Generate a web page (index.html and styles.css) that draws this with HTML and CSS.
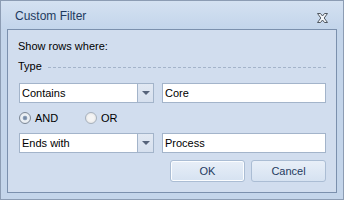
FILE: index.html
```html
<!DOCTYPE html>
<html lang="en">
<head>
    <meta charset="UTF-8">
    <title>Custom Filter</title>
    <link rel="stylesheet" href="styles.css">
</head>
<body>
    <div class="window">
        <div class="titlebar">
            <span class="title">Custom Filter</span>
            <svg class="close" width="11" height="10" viewBox="0 0 11 10">
                <polygon points="0.5,0.5 3.5,0.5 5.5,3 7.5,0.5 10.5,0.5 7.2,5 10.5,9.5 7.5,9.5 5.5,7 3.5,9.5 0.5,9.5 3.8,5" fill="#f3f6fa" stroke="#4f5760" stroke-width="1" stroke-linejoin="round"/>
            </svg>
        </div>
        <div class="panel">
            <div class="caption">Show rows where:</div>
            <div class="group">
                <span>Type</span>
                <span class="rule"></span>
            </div>

            <div class="row">
                <div class="combo">
                    <span class="combo-text">Contains</span>
                    <span class="combo-btn"><span class="arrow"></span></span>
                </div>
                <div class="textbox">Core</div>
            </div>

            <div class="radios">
                <label class="radio checked"><span class="dot"></span>AND</label>
                <label class="radio"><span class="dot"></span>OR</label>
            </div>

            <div class="row">
                <div class="combo">
                    <span class="combo-text">Ends with</span>
                    <span class="combo-btn"><span class="arrow"></span></span>
                </div>
                <div class="textbox">Process</div>
            </div>

            <div class="buttons">
                <button class="default">OK</button>
                <button>Cancel</button>
            </div>
        </div>
    </div>
</body>
</html>
```

FILE: styles.css
```css
body {
    margin: 0;
    font-family: "Liberation Sans", Arial, sans-serif;
    font-size: 11px;
    color: #000;
}
.window {
    width: 344px;
    height: 200px;
    box-sizing: border-box;
    border: 1px solid #8c9cb3;
    background-color: #c4d5ea;
    display: flex;
    flex-direction: column;
}
.titlebar {
    height: 28px;
    flex: none;
    display: flex;
    align-items: center;
    justify-content: space-between;
    padding: 2px 15px 0 14px;
    box-sizing: border-box;
    background: linear-gradient(#d4e1f1, #c3d5eb);
}
.title {
    font-size: 12px;
    color: #1e3a60;
}
.close {
    display: block;
    margin-top: 3px;
}
.panel {
    flex: 1;
    margin: 0 6px 6px;
    border: 1px solid #7b90ad;
    background-color: #d1ddee;
    padding: 0 10px 0 10px;
}
.caption {
    margin-top: 10px;
    line-height: 13px;
}
.group {
    margin-top: 7px;
    display: flex;
    align-items: center;
    line-height: 13px;
}
.rule {
    flex: 1;
    margin-left: 6px;
    margin-top: 2px;
    border-top: 1px dashed #a4b4ca;
}
.row {
    display: flex;
    margin-left: 1px;
    gap: 8px;
}
.group + .row {
    margin-top: 10px;
}
.combo, .textbox {
    height: 20px;
    box-sizing: border-box;
    border: 1px solid #a3b4ca;
    background-color: #fff;
    display: flex;
    align-items: center;
}
.combo {
    width: 135px;
}
.combo-text {
    flex: 1;
    padding-left: 2px;
}
.combo-btn {
    width: 16px;
    height: 100%;
    box-sizing: border-box;
    border-left: 1px solid #a3b4ca;
    background: linear-gradient(#e2e9f3, #d6e0ee);
    display: flex;
    align-items: center;
    justify-content: center;
}
.arrow {
    width: 0;
    height: 0;
    border-left: 4px solid transparent;
    border-right: 4px solid transparent;
    border-top: 4px solid #56637a;
}
.textbox {
    flex: 1;
    padding-left: 2px;
}
.radios {
    height: 30px;
    display: flex;
    align-items: center;
    margin-left: 1px;
}
.radio {
    display: flex;
    align-items: center;
    gap: 4px;
    width: 66px;
}
.dot {
    width: 12px;
    height: 12px;
    box-sizing: border-box;
    border-radius: 50%;
    border: 1px solid #a7b1bd;
    background: radial-gradient(circle, #f4f4f4 40%, #dcdcdc 100%);
}
.radio.checked .dot {
    border-color: #7d8896;
    background: radial-gradient(circle, #6a7d98 0, #8fa3bd 28%, #eef2f6 38%, #dde3ea 100%);
}
.buttons {
    margin-top: 7px;
    display: flex;
    justify-content: flex-end;
    gap: 6px;
}
.buttons button {
    width: 75px;
    height: 22px;
    border: 1px solid #abbdd4;
    border-radius: 3px;
    background: linear-gradient(#e8eff8, #d6e2f1);
    font-family: "Liberation Sans", Arial, sans-serif;
    font-size: 11px;
    color: #1e3a60;
    padding: 0;
}
.buttons button.default {
    box-shadow: inset 0 0 0 1px #fbfdff;
}
```
